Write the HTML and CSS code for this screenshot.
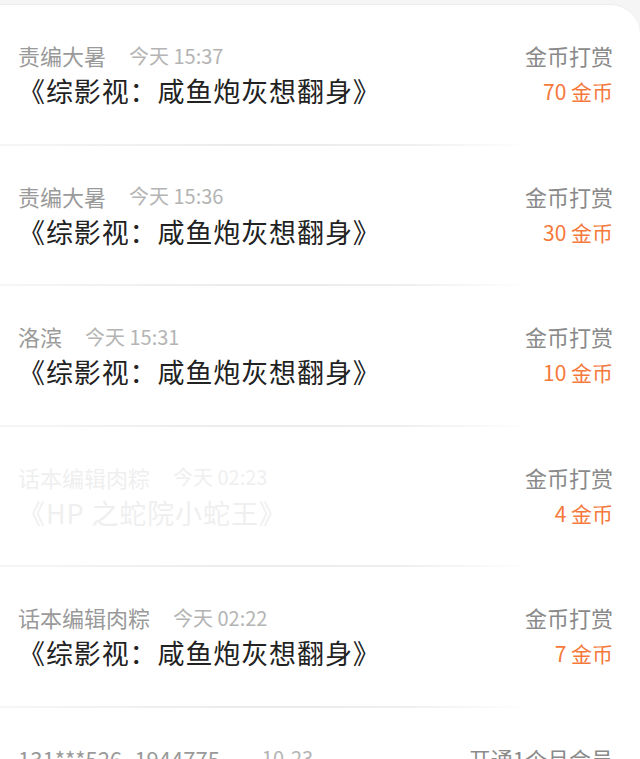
FILE: index.html
```html
<!DOCTYPE html>
<html>
<head>
<meta name="viewport" content="width=device-width, initial-scale=1">
<title>打赏记录</title>
<link rel="stylesheet" href="styles.css">
</head>
<body>
    <div class="list">
        <div class="item">
            <div class="who"><span class="name">责编大暑</span><span class="time">今天 15:37</span></div>
            <div class="kind">金币打赏</div>
            <div class="book">《综影视：咸鱼炮灰想翻身》</div>
            <div class="amount">70 金币</div>
        </div>
        <div class="item">
            <div class="who"><span class="name">责编大暑</span><span class="time">今天 15:36</span></div>
            <div class="kind">金币打赏</div>
            <div class="book">《综影视：咸鱼炮灰想翻身》</div>
            <div class="amount">30 金币</div>
        </div>
        <div class="item">
            <div class="who"><span class="name">洛滨</span><span class="time">今天 15:31</span></div>
            <div class="kind">金币打赏</div>
            <div class="book">《综影视：咸鱼炮灰想翻身》</div>
            <div class="amount">10 金币</div>
        </div>
        <div class="item faded">
            <div class="who"><span class="name">话本编辑肉粽</span><span class="time">今天 02:23</span></div>
            <div class="kind">金币打赏</div>
            <div class="book">《HP 之蛇院小蛇王》</div>
            <div class="amount">4 金币</div>
        </div>
        <div class="item">
            <div class="who"><span class="name">话本编辑肉粽</span><span class="time">今天 02:22</span></div>
            <div class="kind">金币打赏</div>
            <div class="book">《综影视：咸鱼炮灰想翻身》</div>
            <div class="amount">7 金币</div>
        </div>
        <div class="item">
            <div class="who wide"><span class="name">131***526_1944775</span><span class="time">10-23</span></div>
            <div class="kind">开通1个月会员</div>
            <div class="book">&nbsp;</div>
            <div class="amount">&nbsp;</div>
        </div>
    </div>
</body>
</html>
```

FILE: styles.css
```css
body {
    margin: 0;
    padding-top: 4px;
    background-color: #f5f5f5;
    font-family: "Noto Sans CJK SC", "Noto Sans", sans-serif;
    overflow: hidden;
}

.list {
    background-color: #fff;
    border-top: 1px solid #ececec;
    border-top-right-radius: 30px;
}

.item {
    display: grid;
    grid-template-columns: 1fr auto;
    grid-template-rows: 30px 36px;
    row-gap: 3px;
    padding: 35px 27px 36.5px 18px;
    position: relative;
}

.item::after {
    content: "";
    position: absolute;
    left: 0;
    bottom: 0;
    width: 83%;
    height: 2px;
    background: linear-gradient(to right, #f6f6f6, #ececec 45%, #eeeeee 75%, rgba(240, 240, 240, 0));
}

.who {
    display: flex;
    align-items: center;
    gap: 23px;
}

.who.wide {
    gap: 42px;
}

.name {
    font-size: 22px;
    color: #9a9a9a;
}

.time {
    font-size: 20px;
    color: #b4b4b4;
}

.kind {
    font-size: 22px;
    color: #8a8a8a;
    text-align: right;
    line-height: 30px;
}

.book {
    font-size: 27px;
    letter-spacing: 0.9px;
    color: #222;
    line-height: 36px;
}

.amount {
    font-size: 21px;
    color: #f5793b;
    text-align: right;
    line-height: 36px;
}

.faded .name,
.faded .time,
.faded .book {
    color: #efefef;
}
```
